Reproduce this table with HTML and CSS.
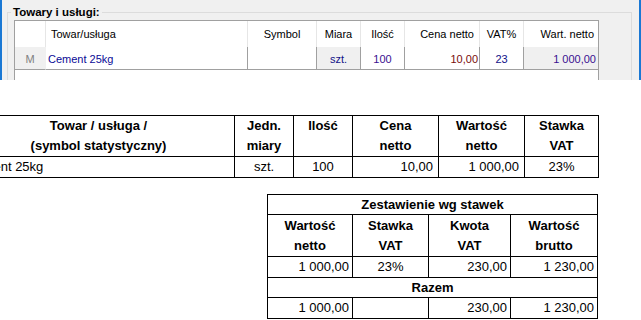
FILE: index.html
```html
<!DOCTYPE html>
<html lang="pl">
<head>
<meta charset="utf-8">
<title>Towary i usługi</title>
<link rel="stylesheet" href="styles.css">
</head>
<body>
<div class="panel">
  <fieldset class="group">
    <legend>Towary i usługi:</legend>
    <div class="grid">
      <div class="gh"></div>
      <div class="gh left">Towar/usługa</div>
      <div class="gh center">Symbol</div>
      <div class="gh center">Miara</div>
      <div class="gh center">Ilość</div>
      <div class="gh right">Cena netto</div>
      <div class="gh center">VAT%</div>
      <div class="gh right last">Wart. netto</div>

      <div class="gd rowhead">M</div>
      <div class="gd name">Cement 25kg</div>
      <div class="gd"></div>
      <div class="gd center shade navy">szt.</div>
      <div class="gd center violet">100</div>
      <div class="gd num maroon">10,00</div>
      <div class="gd center navy">23</div>
      <div class="gd num shade violet last">1 000,00</div>
    </div>
  </fieldset>
</div>

<table class="inv items">
  <colgroup>
    <col class="c-name"><col class="c-unit"><col class="c-qty"><col class="c-price"><col class="c-value"><col class="c-rate">
  </colgroup>
  <tr>
    <th>Towar / usługa /<br>(symbol statystyczny)</th>
    <th>Jedn.<br>miary</th>
    <th>Ilość</th>
    <th>Cena<br>netto</th>
    <th>Wartość<br>netto</th>
    <th>Stawka<br>VAT</th>
  </tr>
  <tr>
    <td class="tl">Cement 25kg</td>
    <td class="tc">szt.</td>
    <td class="tc">100</td>
    <td class="tr">10,00</td>
    <td class="tr">1 000,00</td>
    <td class="tc">23%</td>
  </tr>
</table>

<table class="inv summary">
  <colgroup>
    <col class="s-net"><col class="s-rate"><col class="s-vat"><col class="s-gross">
  </colgroup>
  <tr class="title"><th colspan="4">Zestawienie wg stawek</th></tr>
  <tr class="heads">
    <th>Wartość<br>netto</th>
    <th>Stawka<br>VAT</th>
    <th>Kwota<br>VAT</th>
    <th>Wartość<br>brutto</th>
  </tr>
  <tr>
    <td class="tr">1 000,00</td>
    <td class="tc">23%</td>
    <td class="tr">230,00</td>
    <td class="tr">1 230,00</td>
  </tr>
  <tr class="title"><th colspan="4">Razem</th></tr>
  <tr>
    <td class="tr">1 000,00</td>
    <td class="tc"></td>
    <td class="tr">230,00</td>
    <td class="tr">1 230,00</td>
  </tr>
</table>
</body>
</html>
```

FILE: styles.css
```css
html, body {
  margin: 0;
  padding: 0;
  background: #ffffff;
  overflow: hidden;
}

body {
  font-family: "Liberation Sans", Arial, sans-serif;
  color: #000;
}

/* top application panel */
.panel {
  height: 80px;
  box-sizing: border-box;
  background: #f0f0f0;
  border-left: 2px solid #1a78d4;
  border-right: 2px solid #1a78d4;
  padding-top: 5px;
  overflow: hidden;
}

.group {
  margin: 0 7px 0 5px;
  padding: 1px 0 0 3px;
  border: 1px solid #dcdcdc;
  min-height: 120px;
}

.group legend {
  padding: 0 2px;
  font-size: 11.5px;
  font-weight: bold;
  line-height: 14px;
  color: #000;
}

.grid {
  margin-left: 3px;
  width: 585px;
  height: 110px;
  box-sizing: border-box;
  border: 1px solid #a0a0a0;
  background: #fff;
  display: grid;
  grid-template-columns: 31px 202px 69px 44px 44px 75px 44px 74px;
  grid-template-rows: 26px 23px;
  align-content: start;
  font-size: 11px;
}

.gh, .gd {
  box-sizing: border-box;
  white-space: nowrap;
  overflow: hidden;
}

.gh {
  line-height: 26px;
  padding: 0 5px;
  border-right: 1px solid #e6e6e6;
  color: #000;
}

.gd {
  padding: 3px 0 0;
  line-height: 19px;
  border-right: 1px solid #a0a0a0;
  border-bottom: 1px solid #a0a0a0;
}

.gh.last, .gd.last { border-right: 0; }
.gh.right { padding-right: 5px; }
.gh.last { padding-right: 4px; }

.left { text-align: left; }
.center { text-align: center; }
.right { text-align: right; }

.gd.rowhead {
  background: #f0f0f0;
  color: #808080;
  text-align: center;
  border-right-color: #f0f0f0;
}

.gd.name {
  padding-left: 2px;
  color: #0a0a96;
}

.gd.num {
  text-align: right;
  padding-right: 1px;
}
.gd.num.last { padding-right: 2px; }

.shade { background: #f0f0f0; }
.navy { color: #101088; }
.violet { color: #3a1090; }
.maroon { color: #7a0c0c; }

/* printed invoice tables */
.inv {
  border-collapse: separate;
  border-spacing: 0;
  table-layout: fixed;
  border-top: 1px solid #000;
  border-left: 1px solid #000;
  font-size: 13px;
}

.inv th, .inv td {
  box-sizing: border-box;
  border-right: 1px solid #000;
  border-bottom: 1px solid #000;
  padding: 0 3px;
  line-height: 20px;
  white-space: nowrap;
  overflow: hidden;
}

.inv th {
  font-weight: bold;
  text-align: center;
  vertical-align: top;
}

.tl { text-align: left; }
.tc { text-align: center; }
.tr { text-align: right; }

.items {
  width: 637px;
  margin: 35px 0 0 -38px;
}

.items td.tr { padding-right: 5px; }

.c-name { width: 272px; }
.c-unit { width: 59px; }
.c-qty { width: 59px; }
.c-price { width: 86px; }
.c-value { width: 86px; }
.c-rate { width: 74px; }

.summary {
  width: 331px;
  margin: 16px 0 0 267px;
}

.s-net { width: 85px; }
.s-rate { width: 76px; }
.s-vat { width: 82px; }
.s-gross { width: 87px; }

.summary .title th { line-height: 19px; }
.summary .heads th { padding-top: 1px; }
```
